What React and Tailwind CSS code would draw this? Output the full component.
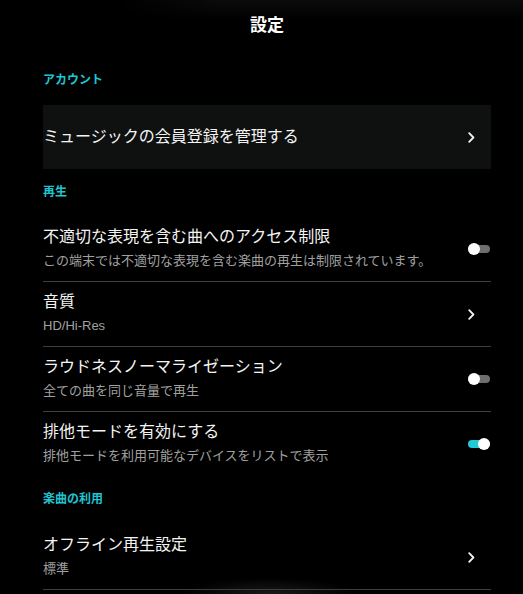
import React from 'react';

const Chevron = () => (
    <svg width="7" height="11" viewBox="0 0 7 11" fill="none">
        <path d="M1.2 1.2L5.4 5.5L1.2 9.8" stroke="#f2f2f2" strokeWidth="1.8" strokeLinecap="round" strokeLinejoin="round" />
    </svg>
);

const Toggle = ({ on }) => (
    <div className="relative w-[22px] h-3">
        <div className={`absolute left-0 right-0 top-[2px] h-2 rounded-full ${on ? 'bg-[#22cbd6]' : 'bg-[#6e6e6e]'}`} />
        <div className={`absolute top-0 w-3 h-3 rounded-full bg-white ${on ? 'right-0' : 'left-0'}`} />
    </div>
);

const SectionTitle = ({ children, className = '' }) => (
    <div className={`text-[12px] leading-4 font-bold text-[#1fc5d2] ${className}`}>{children}</div>
);

const Row = ({ title, sub, control, divider = true }) => (
    <div className={`flex items-center pt-[9px] pb-[11px] ${divider ? 'border-b border-[#3e3e3e]' : ''}`}>
        <div className="flex-1 min-w-0">
            <div className="text-[16px] leading-[22px] text-[#f4f4f4]">{title}</div>
            <div className="mt-1 text-[13px] leading-[18px] text-[#a0a0a0]">{sub}</div>
        </div>
        <div className="w-[23px] flex justify-start items-center mt-[2px]">{control}</div>
    </div>
);

export default function App() {
    return (
        <div
            className="relative w-[523px] h-[594px] overflow-hidden bg-black"
            style={{ fontFamily: '"Liberation Sans", "Noto Sans CJK JP", sans-serif' }}
        >
            <div className="absolute top-0 left-[120px] right-0 h-5 bg-gradient-to-b from-[#0b0b0b] to-transparent [mask-image:linear-gradient(to_right,transparent,black_25%)]" />
            <div className="absolute bottom-0 left-[180px] w-[180px] h-4 bg-[radial-gradient(ellipse_at_bottom,#1a1a1a,transparent_70%)]" />
            <div className="relative">
                <div className="h-[57px] pt-[14px] pl-[11px] text-center text-[17px] leading-6 font-bold text-white">設定</div>
                <div className="ml-[43px] w-[448px]">
                    <SectionTitle className="mt-[15px] mb-[17px]">アカウント</SectionTitle>
                    <div className="h-16 bg-[#0f1010] flex items-center">
                        <div className="flex-1 text-[16px] leading-[22px] text-[#f4f4f4]">ミュージックの会員登録を管理する</div>
                        <div className="w-[23px] flex items-center"><Chevron /></div>
                    </div>
                    <SectionTitle className="mt-[15px] mb-[17px]">再生</SectionTitle>
                    <Row title="不適切な表現を含む曲へのアクセス制限" sub="この端末では不適切な表現を含む楽曲の再生は制限されています。" control={<Toggle on={false} />} />
                    <Row title="音質" sub="HD/Hi-Res" control={<Chevron />} />
                    <Row title="ラウドネスノーマライゼーション" sub="全ての曲を同じ音量で再生" control={<Toggle on={false} />} />
                    <Row title="排他モードを有効にする" sub="排他モードを利用可能なデバイスをリストで表示" control={<Toggle on />} divider={false} />
                    <SectionTitle className="mt-[15px] mb-[18px]">楽曲の利用</SectionTitle>
                    <Row title="オフライン再生設定" sub="標準" control={<Chevron />} />
                </div>
            </div>
        </div>
    );
}
